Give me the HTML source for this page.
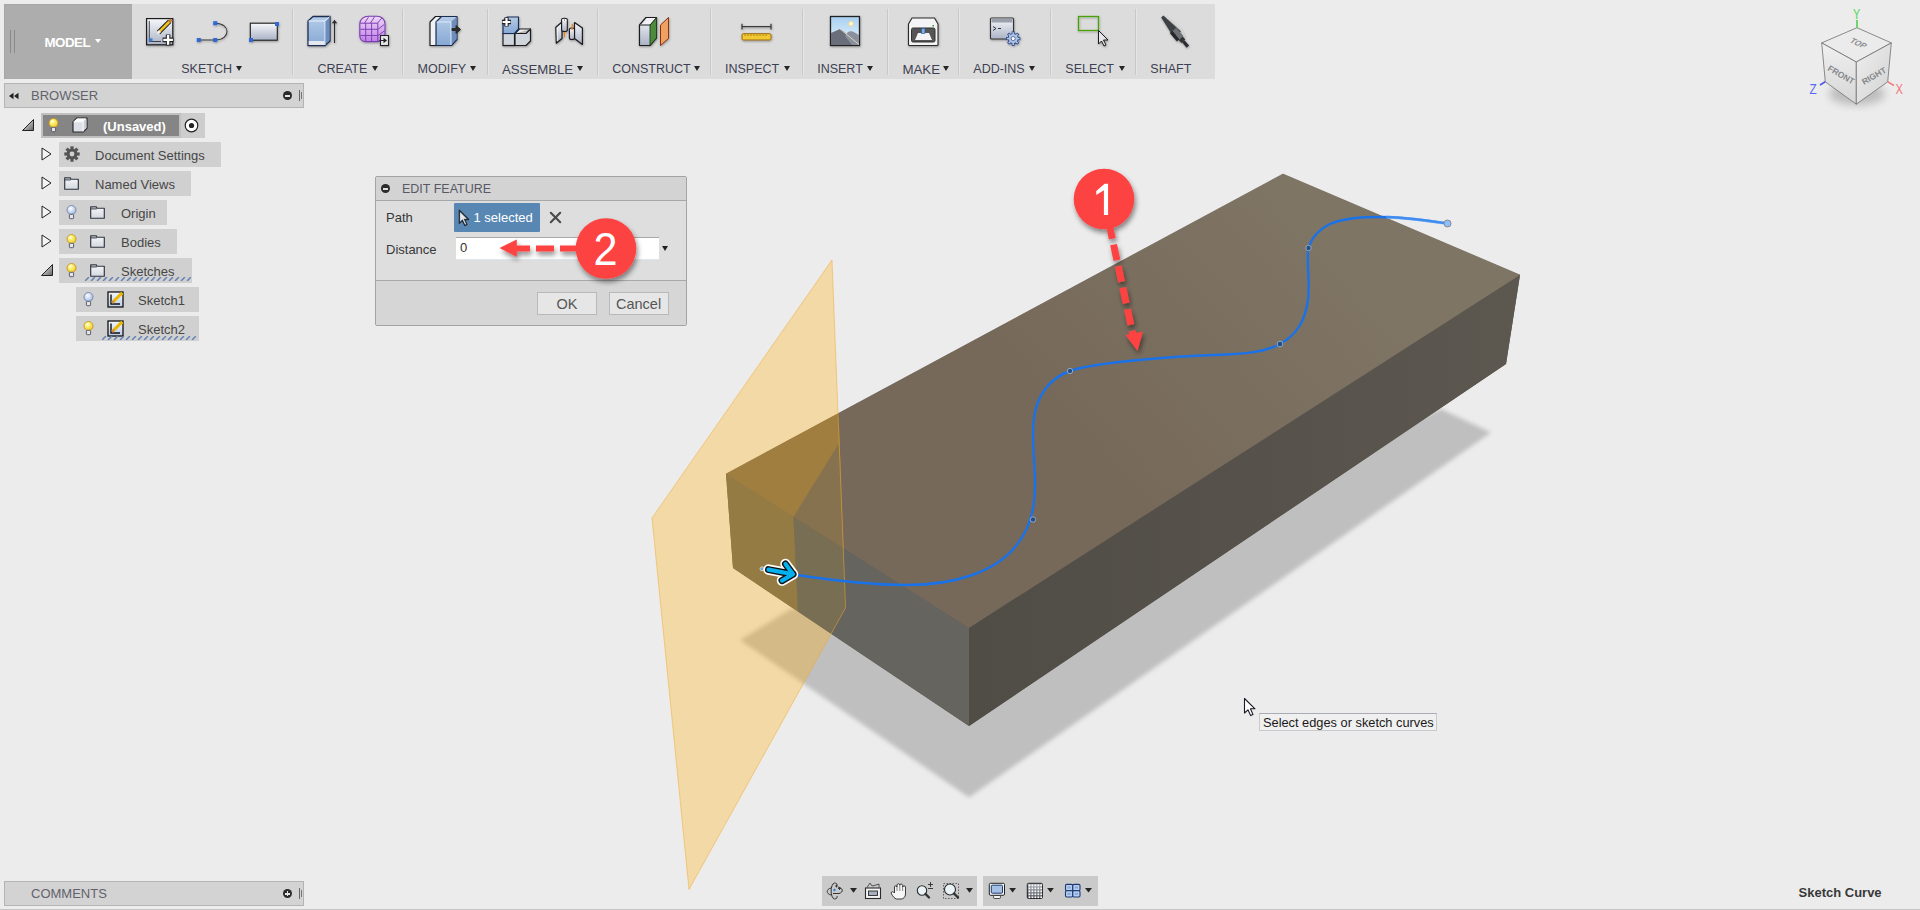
<!DOCTYPE html>
<html><head><meta charset="utf-8">
<style>
*{box-sizing:border-box;margin:0;padding:0}
html,body{width:1920px;height:910px;overflow:hidden;background:#ececec;font-family:"Liberation Sans",sans-serif;font-size:13px;color:#333}
.a{position:absolute}
.tb{left:4px;top:4px;width:1211px;height:75px;background:#dcdcdc}
.model{left:4px;top:4px;width:128px;height:75px;background:#adadad;border-top:1px solid #a6a6a6;border-left:1px solid #a6a6a6}
.sep{width:2px;top:9px;height:66px;background:#c8c8c8;border-right:1px solid #e6e6e6}
.lbl{top:62px;font-size:12.5px;color:#3d3f52;white-space:nowrap;line-height:15px}
.tri2{top:65.5px;width:0;height:0;border-left:3.5px solid transparent;border-right:3.5px solid transparent;border-top:5px solid #262626}
.tri{display:inline-block;width:0;height:0;border-left:4px solid transparent;border-right:4px solid transparent;border-top:6px solid #222;vertical-align:middle;margin-left:4px;position:relative;top:-1px}
.panelhdr{background:#d3d3d3;border:1px solid #b4b4b4}

.txt{white-space:nowrap;line-height:16px}
</style></head>
<body>
<!-- toolbar -->
<div class="a tb"></div>
<div class="a model"></div>
<div class="a" style="left:10px;top:30px;width:1px;height:23px;background:#8a8a8a"></div>
<div class="a" style="left:14px;top:30px;width:1px;height:23px;background:#8a8a8a"></div>
<div class="a txt" style="left:44.5px;top:34.6px;color:#fff;font-size:13.4px;font-weight:bold;letter-spacing:-0.55px">MODEL</div>
<div class="a" style="left:95px;top:39.3px;width:0;height:0;border-left:3.5px solid transparent;border-right:3.5px solid transparent;border-top:4.5px solid #fff"></div>

<div class="a sep" style="left:292px"></div>
<div class="a sep" style="left:402px"></div>
<div class="a sep" style="left:487px"></div>
<div class="a sep" style="left:597px"></div>
<div class="a sep" style="left:710px"></div>
<div class="a sep" style="left:802px"></div>
<div class="a sep" style="left:887px"></div>
<div class="a sep" style="left:958px"></div>
<div class="a sep" style="left:1050px"></div>
<div class="a sep" style="left:1135px"></div>

<div class="a lbl" style="left:181.25px">SKETCH</div><div class="a tri2" style="left:236.25px"></div>
<div class="a lbl" style="left:317.5px">CREATE</div><div class="a tri2" style="left:371.7px"></div>
<div class="a lbl" style="left:417.5px">MODIFY</div><div class="a tri2" style="left:470px"></div>
<div class="a lbl" style="left:502px;font-size:13.2px">ASSEMBLE</div><div class="a tri2" style="left:577px"></div>
<div class="a lbl" style="left:612.2px">CONSTRUCT</div><div class="a tri2" style="left:693.75px"></div>
<div class="a lbl" style="left:725px">INSPECT</div><div class="a tri2" style="left:784px"></div>
<div class="a lbl" style="left:817.2px">INSERT</div><div class="a tri2" style="left:866.9px"></div>
<div class="a lbl" style="left:902.4px;font-size:13.3px">MAKE</div><div class="a tri2" style="left:943.3px"></div>
<div class="a lbl" style="left:973.3px">ADD-INS</div><div class="a tri2" style="left:1029.2px"></div>
<div class="a lbl" style="left:1065.3px">SELECT</div><div class="a tri2" style="left:1118.9px"></div>
<div class="a lbl" style="left:1150.3px">SHAFT</div>



<!-- 3D scene -->
<svg class="a" style="left:0;top:0" width="1920" height="910" viewBox="0 0 1920 910">
<defs>
<filter id="blur4" x="-10%" y="-10%" width="120%" height="120%"><feGaussianBlur stdDeviation="2.2"/></filter>
<filter id="dsh" x="-30%" y="-30%" width="160%" height="160%"><feDropShadow dx="1" dy="3" stdDeviation="2.5" flood-color="#000" flood-opacity="0.35"/></filter>
<linearGradient id="gTop" gradientUnits="userSpaceOnUse" x1="1300" y1="200" x2="900" y2="560"><stop offset="0" stop-color="#7f7565"/><stop offset="0.6" stop-color="#76695a"/><stop offset="1" stop-color="#76695a"/></linearGradient>
<linearGradient id="gRight" x1="0" y1="0" x2="1" y2="0"><stop offset="0" stop-color="#504c46"/><stop offset="1" stop-color="#5c5850"/></linearGradient>
</defs>
<!-- shadow -->
<polygon points="740,640 969,797.5 1491,432.5 1441,409 1000,600 791,609" fill="#bfbfbf" filter="url(#blur4)"/>
<!-- box faces -->
<polygon points="726,474 1283,174 1520,275 1506,364 969,726 733,568" fill="#5e5a52"/>
<polygon points="726,474 1283,174 1520,275 969,628" fill="url(#gTop)" stroke="url(#gTop)" stroke-width="0.6"/>
<polygon points="969,628 1520,275 1506,364 969,726" fill="url(#gRight)"/>
<polygon points="726,474 969,628 969,726 733,568" fill="#65645f"/>
<!-- plane: faint behind-box tint -->
<polygon points="838.6,413.7 839.2,443 793.4,517 798,611.5 831.2,634 845.6,607.7" fill="rgb(255,175,10)" fill-opacity="0.13"/>
<!-- plane: front portions (outside box or in front-left of intersection) -->
<path d="M832,260 L845.6,607.7 L689,889.5 L652,518 Z M838.6,413.7 L839.2,443 L793.4,517 L798,611.5 L831.2,634 L845.6,607.7 Z" fill="rgb(255,175,8)" fill-opacity="0.31" fill-rule="evenodd"/>
<polygon points="832,260 845.6,607.7 689,889.5 652,518" fill="none" stroke="rgb(240,170,50)" stroke-opacity="0.55" stroke-width="0.9"/>

<!-- sketch curve -->
<path d="M797,575 C830,580 870,585 907,585 C955,585 995,572 1016,546 C1032,526 1035,505 1035,483 C1035,460 1031,440 1034,418 C1037,395 1050,378 1070,371 C1095,362 1180,356 1214,355 C1245,354 1266,352 1280,344 C1298,334 1305,320 1308,300 C1310,285 1307,270 1308,250 C1311,238 1318,230 1330,224 C1345,218 1360,217 1380,217 C1405,217 1430,221 1447,223.5" fill="none" stroke="#1a72ea" stroke-width="2.4" stroke-linecap="round"/>
<path d="M1386,217 C1410,218 1430,221 1447,223.5" fill="none" stroke="#5aa0f5" stroke-width="3" stroke-opacity="0.6"/>
<g fill="#244e84" stroke="#9ab0c8" stroke-width="0.9">
<circle cx="1070" cy="371" r="2.7"/><circle cx="1033" cy="519.5" r="2.7"/><circle cx="1280" cy="344" r="2.9"/><circle cx="1308.5" cy="248" r="2.7"/>
</g>
<circle cx="1447.5" cy="223.5" r="3.5" fill="#8ec0ff" stroke="#8a8a8a" stroke-width="1"/>
<circle cx="762" cy="568.8" r="2" fill="#6aa8e8" stroke="#f0d8a8" stroke-width="0.8"/>
<!-- direction arrow -->
<g fill="none" stroke-linecap="round" stroke-linejoin="round">
<path d="M768.5,569.6 L793,574.2 M785.5,564 L793,574.2 L782,580.6" stroke="#fff" stroke-width="10.5"/>
<path d="M768.5,569.6 L793,574.2 M785.5,564 L793,574.2 L782,580.6" stroke="#111" stroke-width="7"/>
<path d="M768.5,569.6 L793,574.2 M785.5,564 L793,574.2 L782,580.6" stroke="#04b0ee" stroke-width="4.2"/>
</g>
</svg>


<!-- dialog -->
<div class="a" style="left:375px;top:176px;width:312px;height:150px;background:#dedede;border:1px solid #a3a3a3;border-radius:2px"></div>
<div class="a" style="left:376px;top:177px;width:310px;height:24px;background:#d3d3d3;border-bottom:1px solid #a8a8a8"></div>
<div class="a" style="left:381px;top:184px;width:9px;height:9px;border-radius:50%;background:#2b2b2b"></div>
<div class="a" style="left:383px;top:188px;width:5px;height:1.6px;background:#e0e0e0"></div>
<div class="a txt" style="left:402px;top:181px;color:#585866;font-size:12.5px">EDIT FEATURE</div>
<div class="a txt" style="left:386px;top:210px;color:#383838">Path</div>
<div class="a" style="left:453.5px;top:202.5px;width:86px;height:29px;background:#5887b3;border-radius:1px"></div>
<svg class="a" style="left:456.3px;top:207.5px" width="15.4" height="19.8" viewBox="0 0 14 18"><path d="M3,2 L3,14 L5.8,11.4 L8,16 L10,15 L7.9,10.5 L11.5,10.5 Z" fill="#5887b3" stroke="#2a2a2a" stroke-width="1.1" stroke-linejoin="round"/><path d="M3.8,3.8 L3.8,12.2 L6,10.1 L8.4,14.9 L9.1,14.6 L6.8,9.7 L9.6,9.7 Z" fill="#e8e8e8"/></svg>
<div class="a txt" style="left:473.5px;top:210px;color:#fff">1 selected</div>
<svg class="a" style="left:549px;top:211px" width="13" height="13" viewBox="0 0 13 13"><path d="M1.8,1.8 L11.2,11.2 M11.2,1.8 L1.8,11.2" stroke="#4a4a4a" stroke-width="2.1" stroke-linecap="round"/></svg>
<div class="a txt" style="left:386px;top:242px;color:#383838">Distance</div>
<div class="a" style="left:456px;top:237px;width:203px;height:23px;background:#fff;border-top:1px solid #a8a8a8;border-bottom:1px solid #dfe6ee"></div>
<div class="a txt" style="left:460px;top:240px;color:#333">0</div>
<div class="a" style="left:662px;top:246px;width:0;height:0;border-left:3.5px solid transparent;border-right:3.5px solid transparent;border-top:5px solid #222"></div>
<div class="a" style="left:376px;top:280px;width:310px;height:45px;background:#d6d6d6;border-top:1px solid #a9a9a9"></div>
<div class="a" style="left:537px;top:292px;width:60px;height:23px;background:#e6e6e6;border:1px solid #b9b9b9"></div>
<div class="a txt" style="left:556.5px;top:296px;color:#555;font-size:14.5px">OK</div>
<div class="a" style="left:609px;top:292px;width:60px;height:23px;background:#e6e6e6;border:1px solid #b9b9b9"></div>
<div class="a txt" style="left:616px;top:296px;color:#555;font-size:14.5px">Cancel</div>

<!-- callouts -->
<svg class="a" style="left:0;top:0" width="1920" height="910" viewBox="0 0 1920 910">
<defs><filter id="cs" x="-50%" y="-50%" width="200%" height="200%"><feDropShadow dx="1.5" dy="3.5" stdDeviation="2.5" flood-color="#000" flood-opacity="0.45"/></filter></defs>
<g filter="url(#cs)">
<line x1="1110" y1="228" x2="1133" y2="335" stroke="#fd4343" stroke-width="7" stroke-dasharray="11 6 16 6 16 6 16 6 16 6 16 6"/>
<polygon points="1125.5,335 1143,331.5 1137.5,351" fill="#fd4343"/>
<circle cx="1104" cy="199" r="30.3" fill="#fd4343"/>
<line x1="576" y1="248.5" x2="514" y2="248.5" stroke="#fd4343" stroke-width="6" stroke-dasharray="16 6 18 6 18 6 18"/>
<polygon points="516.8,239.5 516.8,257 499.5,248" fill="#fd4343"/>
<circle cx="606" cy="248.5" r="30.3" fill="#fd4343"/>
</g>
<path d="M1104.6,183.8 H1108.1 V214.9 H1103.9 V190.3 L1096.3,195.1 V191.1 Z" fill="#fff"/>
<text x="0" y="0" font-family="Liberation Sans" font-size="46" fill="#fff" text-anchor="middle" transform="translate(605.6,264.9) scale(0.94,1)">2</text>
</svg>


<!-- toolbar icons -->
<svg class="a" style="left:0;top:0" width="1220" height="80" viewBox="0 0 1220 80">
<defs>
<linearGradient id="ig1" x1="0" y1="0" x2="0" y2="1"><stop offset="0" stop-color="#f6f7fa"/><stop offset="1" stop-color="#aab2c6"/></linearGradient>
<linearGradient id="ib1" x1="0" y1="0" x2="0" y2="1"><stop offset="0" stop-color="#b4cce8"/><stop offset="1" stop-color="#86a8d4"/></linearGradient>
<linearGradient id="ip1" x1="0" y1="0" x2="0" y2="1"><stop offset="0" stop-color="#f0d8f8"/><stop offset="1" stop-color="#c080e8"/></linearGradient>
<linearGradient id="isky" x1="0" y1="0" x2="0" y2="1"><stop offset="0" stop-color="#a8d0f0"/><stop offset="1" stop-color="#e8f4fc"/></linearGradient>
<filter id="ish" x="-20%" y="-20%" width="150%" height="150%"><feDropShadow dx="0.5" dy="1" stdDeviation="0.8" flood-opacity="0.35"/></filter>
</defs>
<g filter="url(#ish)">
<!-- sketch -->
<rect x="146.6" y="18.6" width="26.2" height="26.2" fill="url(#ig1)" stroke="#1e1e1e" stroke-width="1.2"/>
<path d="M149.3,21 V41.5 H161" fill="none" stroke="#333" stroke-width="0.9"/>
<rect x="149.3" y="38.3" width="3.2" height="3.2" fill="#3a7ae0"/>
<path d="M158.5,32.5 L169.8,21.2" stroke="#222" stroke-width="4.6" stroke-linecap="butt"/>
<path d="M159.2,31.8 L169.5,21.5" stroke="#f0c020" stroke-width="2.6"/>
<path d="M169,22 L171.5,19.5" stroke="#c07838" stroke-width="3"/>
<path d="M157.5,33.5 L160,31" stroke="#f4f0e8" stroke-width="2.6"/>
<path d="M162.6,39.9 H173.6 M168.1,34.4 V45.4" stroke="#222" stroke-width="4.6"/>
<path d="M163.3,39.9 H172.9 M168.1,35.1 V44.7" stroke="#fff" stroke-width="2.4"/>
<!-- spline -->
<path d="M198.8,40 H215.2 C231,40 231,23.2 215.2,23.2" fill="none" stroke="#3a3a3a" stroke-width="1.1"/>
<rect x="196.8" y="38" width="4" height="4" fill="#2f6ad6"/><rect x="213.2" y="38" width="4" height="4" fill="#2f6ad6"/><rect x="213.2" y="21.2" width="4" height="4" fill="#2f6ad6"/>
<!-- rect -->
<rect x="250.3" y="23.2" width="27" height="17" fill="url(#ig1)" stroke="#1e1e1e" stroke-width="1.1"/>
<rect x="249" y="38" width="4" height="4" fill="#2f6ad6"/><rect x="275" y="22" width="4" height="4" fill="#2f6ad6"/>
<!-- extrude -->
<path d="M308,21 L313,16.5 H330 V41 L325,45.5 H308 Z" fill="url(#ib1)" stroke="#1c2e50" stroke-width="1.3" stroke-linejoin="round"/>
<path d="M308.5,21 H325 V45 M325,21 L329.5,16.7" fill="none" stroke="#e8f0fa" stroke-width="1"/>
<path d="M325.5,21.5 L329.5,17.5 V40 L325.5,44 Z" fill="#6e8cbc"/>
<rect x="308.7" y="41" width="16" height="4" fill="#e4e8f0"/>
<path d="M334.5,43 V20.5" fill="none" stroke="#2a2a2a" stroke-width="1.1"/><path d="M331.8,23.2 L334.5,19.8 L337.2,23.2 Z" fill="#2a2a2a"/>
<!-- mesh -->
<path d="M359.8,24 C359.8,19.5 363.5,16.2 368.5,16.2 H377 C381.5,16.2 385,19.5 385,24 V34 C385,38.5 381.5,41.6 377,41.6 H366 C362,41.6 359.8,39 359.8,35.5 Z" fill="url(#ip1)" stroke="#7a3eb0" stroke-width="1.1"/>
<path d="M360.3,23.2 H377.8 V41.2" fill="none" stroke="#7a3eb0" stroke-width="1"/>
<path d="M365.7,23.2 V41.2 M371.6,23.2 V41.2 M360.3,29.3 H377.8 M360.3,35.5 H377.8 M364.5,23 L368.5,17.2 M370.5,23 L374.5,16.8 M377.6,23 L382,17.8 M378,29.3 L384.2,24.5 M378,35.5 L384.6,30.8" stroke="#7a3eb0" stroke-width="0.95"/>
<rect x="380.5" y="35.5" width="8" height="10" fill="#e8e8e8" stroke="#222" stroke-width="1.1"/>
<path d="M379.5,40.5 H384" stroke="#222" stroke-width="1"/><path d="M383.5,37.8 L387,40.5 L383.5,43.2 Z" fill="#222"/>
<!-- modify -->
<path d="M430,22 L435.5,16.5 H442 L437,22 V45.5 H430 Z" fill="#f0f2f6" stroke="#1e1e1e" stroke-width="1.2" stroke-linejoin="round"/>
<path d="M436,22 L441.5,16.5 H457 V39.5 L451.5,45.5 H436 Z" fill="url(#ib1)" stroke="#1c2e50" stroke-width="1.2" stroke-linejoin="round"/>
<path d="M451,22 L456.5,17 V39 L451,45 Z" fill="#6e8cbc"/>
<path d="M436.5,22 H451 V45" fill="none" stroke="#e8f0fa" stroke-width="0.9"/>
<path d="M452,28.5 H456 V25.5 L460.5,29.5 L456,33.5 V30.5 H452 Z" fill="#2a2a2a" stroke="#2a2a2a" stroke-width="1"/>
<!-- assemble new component -->
<rect x="503" y="33.5" width="11.5" height="12" fill="#d0d4dc" stroke="#1e1e1e" stroke-width="1.2"/>
<path d="M515,33.5 H526 L530.5,29 V41 L526,45.5 H515 Z" fill="#d0d4dc" stroke="#1e1e1e" stroke-width="1.2" stroke-linejoin="round"/>
<path d="M515,33.5 L519.5,29 H530.5" fill="#eef0f4" stroke="#1e1e1e" stroke-width="1.2"/>
<path d="M503,33.5 V21 L507.5,17 H518.5 V29 L514.5,33.5 Z" fill="url(#ib1)" stroke="#1c2e50" stroke-width="1.2" stroke-linejoin="round"/>
<path d="M502,22 H511 M506.5,17.5 V26.5" stroke="#222" stroke-width="4.4"/>
<path d="M502.5,22 H510.5 M506.5,18 V26" stroke="#fff" stroke-width="2.2"/>
<!-- joint -->
<path d="M555.8,27.2 L562,22 V38.5 L556.3,43.2 Z" fill="url(#ig1)" stroke="#1a1a1a" stroke-width="1.2" stroke-linejoin="round"/>
<path d="M557.3,28 V41" stroke="#fff" stroke-width="0.8"/>
<path d="M561.6,20 C561.6,17.8 567.3,17.8 567.3,20 V30 C567.3,32 561.6,32 561.6,30 Z" fill="url(#ig1)" stroke="#1a1a1a" stroke-width="1.1"/>
<ellipse cx="564.4" cy="20" rx="2.2" ry="1.2" fill="#fff"/><circle cx="564.4" cy="20" r="0.6" fill="#222"/>
<path d="M564.5,32 V37" stroke="#f07818" stroke-width="1.1"/>
<path d="M574.5,22.5 L582.4,28 V44.4 L574.5,38.5 Z" fill="url(#ig1)" stroke="#1a1a1a" stroke-width="1.2" stroke-linejoin="round"/>
<path d="M569.4,29.5 C569.4,27.5 574.5,27.5 574.5,29.5 V38 C574.5,40 569.4,40 569.4,38 Z" fill="url(#ig1)" stroke="#1a1a1a" stroke-width="1.1"/>
<path d="M572.2,23.8 V30" stroke="#f07818" stroke-width="1.1"/>
<!-- construct -->
<path d="M639.5,25 L646,17.5 H656.5 V38 L650,45.5 H639.5 Z" fill="url(#ig1)" stroke="#1e1e1e" stroke-width="1.2" stroke-linejoin="round"/>
<path d="M650,25 L656.5,17.5 V38 L650,45.5 Z" fill="#4e8a3e" stroke="#1e4018" stroke-width="0.9"/>
<path d="M639.5,25 H650 L656.5,17.5" fill="#f4f4f6" stroke="#1e1e1e" stroke-width="1"/>
<path d="M660.5,25 L668.5,17.5 V38.5 L660.5,45.5 Z" fill="#f0a060" stroke="#8a3010" stroke-width="1" stroke-linejoin="round"/>
<!-- inspect -->
<path d="M742,26.7 H771 M742,23.8 V29.5 M771,23.8 V29.5" stroke="#3a3a3a" stroke-width="1.3"/>
<rect x="742" y="33.7" width="29" height="6.3" rx="1.2" fill="#f0c830" stroke="#9a6a10" stroke-width="1"/>
<path d="M745,34.5 V36 M748,34.5 V36 M751,34.5 V36 M754,34.5 V36 M757,34.5 V36 M760,34.5 V36 M763,34.5 V36 M766,34.5 V36" stroke="#9a6a10" stroke-width="0.8"/>
<!-- insert -->
<rect x="830.5" y="16.5" width="29" height="29" fill="url(#isky)" stroke="#222" stroke-width="1.3"/>
<path d="M831,45 V33 L840,29 C846,32 850,38 858,45 Z" fill="#6a6e7a"/>
<path d="M845,36 L848,32 C852,30 855,33 859,35 V45 H852 Z" fill="#8a909c"/>
<path d="M840,29 L859,44.5" stroke="#f0e8c0" stroke-width="0.8"/>
<circle cx="851" cy="23.7" r="2.3" fill="#fff8d8" stroke="#f8d890" stroke-width="1"/>
<!-- make -->
<path d="M908.5,24 L912,18 H934.5 L938,24 V44.5 Q938,45.5 937,45.5 H909.5 Q908.5,45.5 908.5,44.5 Z" fill="#f4f4f6" stroke="#2a2a2a" stroke-width="1.1" stroke-linejoin="round"/>
<rect x="911.5" y="28" width="23.5" height="14" rx="1.5" fill="#555" stroke="#333" stroke-width="1"/>
<path d="M915,40 L918,33 H929 L932,40 Z" fill="#f4f4f6"/>
<rect x="921.5" y="28.5" width="3.5" height="5" fill="#80b0e0" stroke="#2050a0" stroke-width="0.6"/>
<rect x="932.5" y="25" width="1.5" height="1.5" fill="#20a020"/>
<!-- add-ins -->
<rect x="990.5" y="18" width="23" height="21" rx="1" fill="url(#ig1)" stroke="#333" stroke-width="1.1"/>
<rect x="991.5" y="19" width="21" height="3.5" fill="#9aa0ac"/>
<path d="M993,26.5 L996,28.5 L993,30.5 M998,28.5 H1001" fill="none" stroke="#222" stroke-width="0.9"/>
<g transform="translate(1013.2,38.6)"><g fill="#2a4a8a"><circle r="5.6"/><rect x="-1.5" y="-7.2" width="3" height="3.5" transform="rotate(0)"/><rect x="-1.5" y="-7.2" width="3" height="3.5" transform="rotate(45)"/><rect x="-1.5" y="-7.2" width="3" height="3.5" transform="rotate(90)"/><rect x="-1.5" y="-7.2" width="3" height="3.5" transform="rotate(135)"/><rect x="-1.5" y="-7.2" width="3" height="3.5" transform="rotate(180)"/><rect x="-1.5" y="-7.2" width="3" height="3.5" transform="rotate(225)"/><rect x="-1.5" y="-7.2" width="3" height="3.5" transform="rotate(270)"/><rect x="-1.5" y="-7.2" width="3" height="3.5" transform="rotate(315)"/></g><g fill="#b0c0e0"><circle r="4.6"/><rect x="-0.8" y="-6.4" width="1.6" height="3" transform="rotate(0)"/><rect x="-0.8" y="-6.4" width="1.6" height="3" transform="rotate(45)"/><rect x="-0.8" y="-6.4" width="1.6" height="3" transform="rotate(90)"/><rect x="-0.8" y="-6.4" width="1.6" height="3" transform="rotate(135)"/><rect x="-0.8" y="-6.4" width="1.6" height="3" transform="rotate(180)"/><rect x="-0.8" y="-6.4" width="1.6" height="3" transform="rotate(225)"/><rect x="-0.8" y="-6.4" width="1.6" height="3" transform="rotate(270)"/><rect x="-0.8" y="-6.4" width="1.6" height="3" transform="rotate(315)"/></g><circle r="2" fill="#fff" stroke="#2a4a8a" stroke-width="0.7"/></g>
<!-- select -->
<rect x="1078.5" y="16.5" width="20" height="14" fill="none" stroke="#4aa010" stroke-width="1.3"/>
<path d="M1098.5,30.5 V44 L1101.5,41 L1104,46 L1106,45 L1103.5,40 H1108 Z" fill="#e4e6ec" stroke="#1a1a1a" stroke-width="1" stroke-linejoin="round"/>
<!-- shaft -->
<g transform="translate(1162.6,16.9) rotate(49.7)">
<path d="M3,-2.2 C12,-5.5 22,-7 29,-4" fill="none" stroke="#f2f2f2" stroke-width="0.7" opacity="0.9"/>
<path d="M3,-2.2 C12,-5.5 22,-7 29,-4" fill="none" stroke="#444" stroke-width="0.4" stroke-dasharray="1 1" opacity="0.6"/>
<path d="M-0.5,-1.4 L23,-4.6 L23,4.8 L-0.5,1.4 Z" fill="#3c3f44"/>
<rect x="17" y="-3.4" width="11" height="5" fill="#6c7074"/>
<rect x="17" y="1.6" width="11" height="3.4" fill="#25282b"/>
<rect x="28" y="-2.6" width="4" height="5.2" fill="#303336"/>
<rect x="32" y="-1.6" width="7" height="3.2" fill="#2a2d30"/>
</g>
</g>
</svg>


<!-- tooltip -->
<svg class="a" style="left:1243px;top:697px" width="14" height="21" viewBox="0 0 14 21"><path d="M1.5,1.5 V16 L5,12.8 L7.6,18.6 L10,17.6 L7.5,11.8 H12 Z" fill="#fff" stroke="#1a1a2a" stroke-width="1.1" stroke-linejoin="round"/></svg>
<div class="a" style="left:1259px;top:713px;width:178px;height:18px;background:#f0f0f0;border:1px solid #c8cad0;border-top-color:#a9acb4"></div>
<div class="a txt" style="left:1263px;top:715px;color:#1a1a1a;font-size:12.8px">Select edges or sketch curves</div>

<!-- viewcube -->
<svg class="a" style="left:1790px;top:0" width="130" height="120" viewBox="1790 0 130 120">
<defs>
<linearGradient id="vcL" x1="0" y1="0" x2="0" y2="1"><stop offset="0" stop-color="#f0f0f0"/><stop offset="1" stop-color="#d6d6d6"/></linearGradient>
<linearGradient id="vcR" x1="0" y1="0" x2="1" y2="1"><stop offset="0" stop-color="#eeeeee"/><stop offset="1" stop-color="#d2d2d2"/></linearGradient>
<filter id="vcs" x="-50%" y="-50%" width="200%" height="200%"><feGaussianBlur stdDeviation="4"/></filter>
</defs>
<ellipse cx="1857" cy="94" rx="28" ry="11" fill="#000" opacity="0.2" filter="url(#vcs)"/>
<polygon points="1857,27.7 1891.3,42.9 1856.3,62 1821.7,42.9" fill="#ebebeb" stroke="#707070" stroke-width="0.8"/>
<polygon points="1821.7,42.9 1856.3,62 1856.3,104.2 1825.3,81.8" fill="url(#vcL)" stroke="#707070" stroke-width="0.8"/>
<polygon points="1891.3,42.9 1856.3,62 1856.3,104.2 1887.7,81.8" fill="url(#vcR)" stroke="#707070" stroke-width="0.8"/>
<text x="0" y="0" font-family="Liberation Sans" font-size="8" font-weight="bold" fill="#8e9094" transform="translate(1849,42) rotate(24) skewX(-20)">TOP</text>
<text x="0" y="0" font-family="Liberation Sans" font-size="8.5" font-weight="bold" fill="#86888c" transform="translate(1827,70) rotate(30) skewY(0)">FRONT</text>
<text x="0" y="0" font-family="Liberation Sans" font-size="8.5" font-weight="bold" fill="#86888c" transform="translate(1864,85) rotate(-30)">RIGHT</text>
<line x1="1857" y1="27.7" x2="1857" y2="20" stroke="#50d050" stroke-width="1.6"/>
<text x="0" y="0" font-family="Liberation Sans" font-size="14" fill="#50d850" transform="translate(1853,18.5) scale(0.78,1)">Y</text>
<line x1="1825.3" y1="81.8" x2="1820" y2="85" stroke="#4a5ae8" stroke-width="1.6"/>
<text x="0" y="0" font-family="Liberation Sans" font-size="14" fill="#5a6af0" transform="translate(1809.5,93.7) scale(0.85,1)">Z</text>
<line x1="1887.7" y1="81.8" x2="1894" y2="85.5" stroke="#f08080" stroke-width="1.6"/>
<text x="0" y="0" font-family="Liberation Sans" font-size="14" fill="#f07878" transform="translate(1895.5,93.7) scale(0.8,1)">X</text>
</svg>

<!-- nav bar -->
<div class="a" style="left:822px;top:876px;width:155px;height:30px;background:#cacaca"></div>
<div class="a" style="left:983px;top:876px;width:115px;height:30px;background:#cacaca"></div>
<svg class="a" style="left:820px;top:872px" width="280" height="38" viewBox="820 872 280 38">
<defs><linearGradient id="nvg" x1="0" y1="0" x2="0" y2="1"><stop offset="0" stop-color="#b0b4bc"/><stop offset="1" stop-color="#4e525a"/></linearGradient>
<linearGradient id="nvb" x1="0" y1="0" x2="0" y2="1"><stop offset="0" stop-color="#c8dcf4"/><stop offset="1" stop-color="#88acd8"/></linearGradient></defs>
<g fill="#262626"><path d="M850,888 H857 L853.5,892.8 Z"/><path d="M966,888 H973 L969.5,892.8 Z"/><path d="M1009.2,888 H1016 L1012.6,892.6 Z"/><path d="M1047.1,888 H1053.9 L1050.5,892.6 Z"/><path d="M1085,888 H1092 L1088.5,892.6 Z"/></g>
<!-- orbit -->
<path d="M831,888 C826,889 826,894 831,895 M834.5,883 C830,884 830,898 834.5,899 C837,899 837.5,897 837,896 M834.5,883 C836,883 837,884 837.5,885 M838,887 C843,888 844,892 839,893.5 H833" fill="none" stroke="#333" stroke-width="1"/>
<path d="M833,890 L834.5,888.5 L836,890 L834.5,891.5 Z" fill="#2080e0"/>
<path d="M836.5,884.5 V887.5 M835,886 H838 M839.5,887 V890 M838,888.5 H841" stroke="#333" stroke-width="0.9"/>
<!-- look at -->
<rect x="865.5" y="888" width="15" height="10.5" fill="#f4f4f4" stroke="#2a2a2a" stroke-width="1.1"/>
<rect x="868.5" y="891" width="9" height="4.5" fill="#a8b0c0" stroke="#2a2a2a" stroke-width="0.9"/>
<path d="M867,887.5 L870,883 L872,886 L876,885 L879,884 V887.5" fill="none" stroke="#444" stroke-width="0.9"/>
<!-- hand -->
<path d="M896.5,899 C894.5,898.5 893,896.5 891.5,894 C890.5,892.5 892,891 893.5,892 L894.5,893 V887 C894.5,885.3 897,885.3 897,887 V885 C897,883.3 899.8,883.3 899.8,885 V885.3 C899.8,883.6 902.6,883.6 902.6,885.3 V887 C902.6,885.5 905.5,885.5 905.5,887 V894 C905.5,897 903.5,899 901,899 Z" fill="#f6f6f6" stroke="#2a2a2a" stroke-width="0.9" stroke-linejoin="round"/>
<path d="M897,887 V891 M899.8,885.5 V891 M902.6,887 V891" stroke="#555" stroke-width="0.7"/>
<!-- zoom -->
<circle cx="922" cy="890.5" r="4.7" fill="#e8f4f8" stroke="#2a2a2a" stroke-width="1.1"/>
<path d="M925.5,894 L929,897.5" stroke="#333" stroke-width="2.4" stroke-linecap="round"/>
<path d="M928,884.5 H933 M930.5,882 V887 M928,888.5 H933" stroke="#2a2a2a" stroke-width="0.9"/>
<!-- zoom window -->
<rect x="943.5" y="883.5" width="15" height="15" fill="none" stroke="#444" stroke-width="0.8" stroke-dasharray="1.5 1.5"/>
<circle cx="950" cy="889.5" r="5.5" fill="#eaf4f6" stroke="#2a2a2a" stroke-width="1.1"/>
<path d="M954,893.5 L958,897.5" stroke="#333" stroke-width="2.4" stroke-linecap="round"/>
<!-- monitor -->
<rect x="989.3" y="883.3" width="15.2" height="12" rx="1.2" fill="#f4f4f4" stroke="#222" stroke-width="1"/>
<rect x="991.3" y="885.2" width="11.2" height="8" rx="1" fill="#a4c0e4" stroke="#1c3a70" stroke-width="1"/>
<rect x="993.5" y="895.5" width="7" height="3" rx="1.2" fill="#f4f4f4" stroke="#222" stroke-width="0.8"/>
<!-- grid -->
<rect x="1027.3" y="883.3" width="15.2" height="15.2" rx="1.2" fill="url(#nvg)" stroke="#222" stroke-width="1"/>
<g fill="#fff"><rect x="1028.60" y="884.60" width="1.7" height="1.7"/><rect x="1028.60" y="887.55" width="1.7" height="1.7"/><rect x="1028.60" y="890.50" width="1.7" height="1.7"/><rect x="1028.60" y="893.45" width="1.7" height="1.7"/><rect x="1028.60" y="896.40" width="1.7" height="1.7"/><rect x="1031.55" y="884.60" width="1.7" height="1.7"/><rect x="1031.55" y="887.55" width="1.7" height="1.7"/><rect x="1031.55" y="890.50" width="1.7" height="1.7"/><rect x="1031.55" y="893.45" width="1.7" height="1.7"/><rect x="1031.55" y="896.40" width="1.7" height="1.7"/><rect x="1034.50" y="884.60" width="1.7" height="1.7"/><rect x="1034.50" y="887.55" width="1.7" height="1.7"/><rect x="1034.50" y="890.50" width="1.7" height="1.7"/><rect x="1034.50" y="893.45" width="1.7" height="1.7"/><rect x="1034.50" y="896.40" width="1.7" height="1.7"/><rect x="1037.45" y="884.60" width="1.7" height="1.7"/><rect x="1037.45" y="887.55" width="1.7" height="1.7"/><rect x="1037.45" y="890.50" width="1.7" height="1.7"/><rect x="1037.45" y="893.45" width="1.7" height="1.7"/><rect x="1037.45" y="896.40" width="1.7" height="1.7"/><rect x="1040.40" y="884.60" width="1.7" height="1.7"/><rect x="1040.40" y="887.55" width="1.7" height="1.7"/><rect x="1040.40" y="890.50" width="1.7" height="1.7"/><rect x="1040.40" y="893.45" width="1.7" height="1.7"/><rect x="1040.40" y="896.40" width="1.7" height="1.7"/></g>
<!-- viewports -->
<g stroke="#1c3a70" stroke-width="1.1" fill="#b4cdf0">
<rect x="1065.5" y="884.4" width="7.2" height="6.2" rx="1.2"/><rect x="1072.8" y="884.4" width="7.2" height="6.2" rx="1.2"/>
<rect x="1065.5" y="890.8" width="7.2" height="6.2" rx="1.2"/><rect x="1072.8" y="890.8" width="7.2" height="6.2" rx="1.2"/>
</g>
<g fill="#8aa8d8"><rect x="1067.5" y="886.5" width="3.2" height="2"/><rect x="1074.8" y="886.5" width="3.2" height="2"/><rect x="1067.5" y="892.9" width="3.2" height="2"/><rect x="1074.8" y="892.9" width="3.2" height="2"/></g>
</svg>

<!-- ICONS placeholder -->
<div id="icons"></div>

<!-- browser -->
<div class="a panelhdr" style="left:4px;top:83px;width:300px;height:25px"></div>
<div class="a txt" style="left:31px;top:87.5px;color:#62626c">BROWSER</div>
<svg class="a" style="left:8px;top:92px" width="12" height="8" viewBox="0 0 12 8"><path d="M1,4 L5.5,0.8 V7.2 Z M6,4 L10.5,0.8 V7.2 Z" fill="#222"/></svg>
<div class="a" style="left:283px;top:91px;width:9px;height:9px;border-radius:50%;background:#2b2b2b"></div>
<div class="a" style="left:285px;top:95px;width:5px;height:1.6px;background:#e6e6e6"></div>
<div class="a" style="left:299px;top:90px;width:1px;height:11px;background:#666"></div>
<div class="a" style="left:301px;top:92px;width:1px;height:7px;background:#777"></div>


<!-- tree -->
<svg width="0" height="0" style="position:absolute"><defs>
<radialGradient id="bgy" cx="0.38" cy="0.32" r="0.75"><stop offset="0" stop-color="#fffff4"/><stop offset="0.35" stop-color="#fbef70"/><stop offset="1" stop-color="#f0c828"/></radialGradient>
<radialGradient id="bgb" cx="0.4" cy="0.35" r="0.7"><stop offset="0" stop-color="#ffffff"/><stop offset="1" stop-color="#9ab4e4"/></radialGradient>
<linearGradient id="fg" x1="0" y1="0" x2="0" y2="1"><stop offset="0" stop-color="#f8f8fa"/><stop offset="1" stop-color="#d4d8e0"/></linearGradient>
<linearGradient id="eg" x1="0" y1="0" x2="1" y2="1"><stop offset="0" stop-color="#ffffff"/><stop offset="1" stop-color="#606060"/></linearGradient>
<linearGradient id="sg" x1="0" y1="0" x2="0" y2="1"><stop offset="0" stop-color="#f4f6fa"/><stop offset="1" stop-color="#b8cce8"/></linearGradient>
</defs></svg><div class="a" style="left:41px;top:113px;width:164px;height:25px;background:#cdcdcd"></div><div class="a" style="left:41px;top:113px;width:140px;height:25px;background:#c0c0c0"></div><div class="a" style="left:43px;top:115px;width:136px;height:21px;background:#858585"></div><svg class="a" style="left:22px;top:119px" width="12" height="12" viewBox="0 0 12 12"><path d="M11.5,0.5 L11.5,11.5 L0.5,11.5 Z" fill="url(#eg)" stroke="#222" stroke-width="1"/></svg><svg class="a" style="left:48px;top:118px" width="11" height="15" viewBox="0 0 11 15"><circle cx="5.5" cy="5" r="4.5" fill="url(#bgy)" stroke="#c08a18" stroke-width="0.8"/><rect x="3.4" y="9.3" width="4.2" height="4.4" rx="0.8" fill="#e4e4ea" stroke="#4a5060" stroke-width="0.9"/></svg><svg class="a" style="left:72px;top:117px" width="16" height="16" viewBox="0 0 16 16"><path d="M1,4.8 L4.8,1 H15 V11.2 L11.2,15 H1 Z" fill="#dcdfe6" stroke="#2a2a2a" stroke-width="1.2" stroke-linejoin="round"/><path d="M1.6,4.8 H11.2 V14.4" fill="none" stroke="#fff" stroke-width="1.1"/><path d="M11.8,4.5 L14.4,1.8 V11 L11.8,13.6 Z" fill="#c8ccd6"/><path d="M2,4.2 L5,1.6 H14.2 L11.2,4.2 Z" fill="#fafafa"/></svg><div class="a txt" style="left:103px;top:119px;color:#3f3f3f;color:#fff;font-weight:bold">(Unsaved)</div><svg class="a" style="left:184px;top:118px" width="15" height="15" viewBox="0 0 15 15"><circle cx="7.5" cy="7.5" r="6.3" fill="#fff" stroke="#222" stroke-width="1.2"/><circle cx="7.5" cy="7.5" r="2.6" fill="#222"/></svg><div class="a" style="left:59px;top:142px;width:162px;height:24.5px;background:#d0d0d0"></div><svg class="a" style="left:41px;top:147px" width="11" height="14" viewBox="0 0 11 14"><path d="M1,1 L10,7 L1,13 Z" fill="#f4f4f4" stroke="#222" stroke-width="1" stroke-linejoin="round"/></svg><svg class="a" style="left:64px;top:146px" width="16" height="16" viewBox="0 0 16 16"><g fill="#555"><circle cx="8" cy="8" r="5.4"/><rect x="6.4" y="0.3" width="3.2" height="4" transform="rotate(0 8 8)"/><rect x="6.4" y="0.3" width="3.2" height="4" transform="rotate(45 8 8)"/><rect x="6.4" y="0.3" width="3.2" height="4" transform="rotate(90 8 8)"/><rect x="6.4" y="0.3" width="3.2" height="4" transform="rotate(135 8 8)"/><rect x="6.4" y="0.3" width="3.2" height="4" transform="rotate(180 8 8)"/><rect x="6.4" y="0.3" width="3.2" height="4" transform="rotate(225 8 8)"/><rect x="6.4" y="0.3" width="3.2" height="4" transform="rotate(270 8 8)"/><rect x="6.4" y="0.3" width="3.2" height="4" transform="rotate(315 8 8)"/></g><circle cx="8" cy="8" r="2.4" fill="#d0d0d0"/></svg><div class="a txt" style="left:95px;top:148px;color:#464646;">Document Settings</div><div class="a" style="left:59px;top:171px;width:132px;height:24.5px;background:#d0d0d0"></div><svg class="a" style="left:41px;top:176px" width="11" height="14" viewBox="0 0 11 14"><path d="M1,1 L10,7 L1,13 Z" fill="#f4f4f4" stroke="#222" stroke-width="1" stroke-linejoin="round"/></svg><svg class="a" style="left:64px;top:177px" width="15" height="13" viewBox="0 0 15 13"><path d="M0.7,0.8 H6.3 L7,2.2 H14.3 V12.2 H0.7 Z" fill="url(#fg)" stroke="#2e3540" stroke-width="1.15" stroke-linejoin="round"/><path d="M0.7,2.9 H6.8" stroke="#2e3540" stroke-width="1"/></svg><div class="a txt" style="left:95px;top:177px;color:#464646;">Named Views</div><div class="a" style="left:59px;top:200px;width:108px;height:24.5px;background:#d0d0d0"></div><svg class="a" style="left:41px;top:205px" width="11" height="14" viewBox="0 0 11 14"><path d="M1,1 L10,7 L1,13 Z" fill="#f4f4f4" stroke="#222" stroke-width="1" stroke-linejoin="round"/></svg><svg class="a" style="left:66px;top:205px" width="11" height="15" viewBox="0 0 11 15"><circle cx="5.5" cy="5" r="4.5" fill="url(#bgb)" stroke="#6a7ca0" stroke-width="0.8"/><rect x="3.4" y="9.3" width="4.2" height="4.4" rx="0.8" fill="#e4e4ea" stroke="#4a5060" stroke-width="0.9"/></svg><svg class="a" style="left:90px;top:206px" width="15" height="13" viewBox="0 0 15 13"><path d="M0.7,0.8 H6.3 L7,2.2 H14.3 V12.2 H0.7 Z" fill="url(#fg)" stroke="#2e3540" stroke-width="1.15" stroke-linejoin="round"/><path d="M0.7,2.9 H6.8" stroke="#2e3540" stroke-width="1"/></svg><div class="a txt" style="left:121px;top:206px;color:#464646;">Origin</div><div class="a" style="left:59px;top:229px;width:118px;height:24.5px;background:#d0d0d0"></div><svg class="a" style="left:41px;top:234px" width="11" height="14" viewBox="0 0 11 14"><path d="M1,1 L10,7 L1,13 Z" fill="#f4f4f4" stroke="#222" stroke-width="1" stroke-linejoin="round"/></svg><svg class="a" style="left:66px;top:234px" width="11" height="15" viewBox="0 0 11 15"><circle cx="5.5" cy="5" r="4.5" fill="url(#bgy)" stroke="#c08a18" stroke-width="0.8"/><rect x="3.4" y="9.3" width="4.2" height="4.4" rx="0.8" fill="#e4e4ea" stroke="#4a5060" stroke-width="0.9"/></svg><svg class="a" style="left:90px;top:235px" width="15" height="13" viewBox="0 0 15 13"><path d="M0.7,0.8 H6.3 L7,2.2 H14.3 V12.2 H0.7 Z" fill="url(#fg)" stroke="#2e3540" stroke-width="1.15" stroke-linejoin="round"/><path d="M0.7,2.9 H6.8" stroke="#2e3540" stroke-width="1"/></svg><div class="a txt" style="left:121px;top:235px;color:#464646;">Bodies</div><div class="a" style="left:59px;top:258px;width:133px;height:24.5px;background:#d0d0d0"></div><svg class="a" style="left:41px;top:264px" width="12" height="12" viewBox="0 0 12 12"><path d="M11.5,0.5 L11.5,11.5 L0.5,11.5 Z" fill="url(#eg)" stroke="#222" stroke-width="1"/></svg><svg class="a" style="left:66px;top:263px" width="11" height="15" viewBox="0 0 11 15"><circle cx="5.5" cy="5" r="4.5" fill="url(#bgy)" stroke="#c08a18" stroke-width="0.8"/><rect x="3.4" y="9.3" width="4.2" height="4.4" rx="0.8" fill="#e4e4ea" stroke="#4a5060" stroke-width="0.9"/></svg><svg class="a" style="left:90px;top:264px" width="15" height="13" viewBox="0 0 15 13"><path d="M0.7,0.8 H6.3 L7,2.2 H14.3 V12.2 H0.7 Z" fill="url(#fg)" stroke="#2e3540" stroke-width="1.15" stroke-linejoin="round"/><path d="M0.7,2.9 H6.8" stroke="#2e3540" stroke-width="1"/></svg><div class="a txt" style="left:121px;top:264px;color:#464646;">Sketches</div><svg class="a" style="left:85px;top:277px" width="106" height="4" viewBox="0 0 106 4"><path d="M0.5,3.5 L3.5,0.5 M6.5,3.5 L9.5,0.5 M12.5,3.5 L15.5,0.5 M18.5,3.5 L21.5,0.5 M24.5,3.5 L27.5,0.5 M30.5,3.5 L33.5,0.5 M36.5,3.5 L39.5,0.5 M42.5,3.5 L45.5,0.5 M48.5,3.5 L51.5,0.5 M54.5,3.5 L57.5,0.5 M60.5,3.5 L63.5,0.5 M66.5,3.5 L69.5,0.5 M72.5,3.5 L75.5,0.5 M78.5,3.5 L81.5,0.5 M84.5,3.5 L87.5,0.5 M90.5,3.5 L93.5,0.5 M96.5,3.5 L99.5,0.5 M102.5,3.5 L105.5,0.5 " stroke="#6582b4" stroke-width="1.5" stroke-linecap="round"/></svg><div class="a" style="left:76px;top:287px;width:123px;height:24.5px;background:#d0d0d0"></div><svg class="a" style="left:83px;top:292px" width="11" height="15" viewBox="0 0 11 15"><circle cx="5.5" cy="5" r="4.5" fill="url(#bgb)" stroke="#6a7ca0" stroke-width="0.8"/><rect x="3.4" y="9.3" width="4.2" height="4.4" rx="0.8" fill="#e4e4ea" stroke="#4a5060" stroke-width="0.9"/></svg><svg class="a" style="left:107px;top:291px" width="17" height="17" viewBox="0 0 17 17"><rect x="1" y="1" width="15" height="15" fill="url(#sg)" stroke="#111" stroke-width="1.3"/><path d="M4,3.5 V13 H13" fill="none" stroke="#111" stroke-width="1.4"/><path d="M5.5,11.5 L13.5,3.5 L15.5,2" stroke="#e8b800" stroke-width="3"/><path d="M5,12 L7.2,9.6" stroke="#d08850" stroke-width="2"/></svg><div class="a txt" style="left:138px;top:293px;color:#464646;">Sketch1</div><div class="a" style="left:76px;top:316px;width:123px;height:24.5px;background:#d0d0d0"></div><svg class="a" style="left:83px;top:321px" width="11" height="15" viewBox="0 0 11 15"><circle cx="5.5" cy="5" r="4.5" fill="url(#bgy)" stroke="#c08a18" stroke-width="0.8"/><rect x="3.4" y="9.3" width="4.2" height="4.4" rx="0.8" fill="#e4e4ea" stroke="#4a5060" stroke-width="0.9"/></svg><svg class="a" style="left:107px;top:320px" width="17" height="17" viewBox="0 0 17 17"><rect x="1" y="1" width="15" height="15" fill="url(#sg)" stroke="#111" stroke-width="1.3"/><path d="M4,3.5 V13 H13" fill="none" stroke="#111" stroke-width="1.4"/><path d="M5.5,11.5 L13.5,3.5 L15.5,2" stroke="#e8b800" stroke-width="3"/><path d="M5,12 L7.2,9.6" stroke="#d08850" stroke-width="2"/></svg><div class="a txt" style="left:138px;top:322px;color:#464646;">Sketch2</div><svg class="a" style="left:102px;top:336px" width="94" height="4" viewBox="0 0 94 4"><path d="M0.5,3.5 L3.5,0.5 M6.5,3.5 L9.5,0.5 M12.5,3.5 L15.5,0.5 M18.5,3.5 L21.5,0.5 M24.5,3.5 L27.5,0.5 M30.5,3.5 L33.5,0.5 M36.5,3.5 L39.5,0.5 M42.5,3.5 L45.5,0.5 M48.5,3.5 L51.5,0.5 M54.5,3.5 L57.5,0.5 M60.5,3.5 L63.5,0.5 M66.5,3.5 L69.5,0.5 M72.5,3.5 L75.5,0.5 M78.5,3.5 L81.5,0.5 M84.5,3.5 L87.5,0.5 M90.5,3.5 L93.5,0.5 " stroke="#6582b4" stroke-width="1.5" stroke-linecap="round"/></svg>
<!-- comments -->
<div class="a panelhdr" style="left:4px;top:881px;width:300px;height:25px"></div>
<div class="a txt" style="left:31px;top:885.5px;color:#62626c">COMMENTS</div>
<div class="a" style="left:283px;top:889px;width:9px;height:9px;border-radius:50%;background:#2b2b2b"></div>
<div class="a" style="left:285px;top:893px;width:5px;height:1.6px;background:#e6e6e6"></div>
<div class="a" style="left:286.7px;top:891px;width:1.6px;height:5px;background:#e6e6e6"></div>
<div class="a" style="left:299px;top:888px;width:1px;height:11px;background:#666"></div>
<div class="a" style="left:301px;top:890px;width:1px;height:7px;background:#777"></div>


<!-- status -->
<div class="a txt" style="left:1798.5px;top:884.5px;font-weight:bold;color:#383838">Sketch Curve</div>
<div class="a" style="left:0;top:909px;width:1920px;height:1px;background:#c6c6c6"></div>
</body></html>
